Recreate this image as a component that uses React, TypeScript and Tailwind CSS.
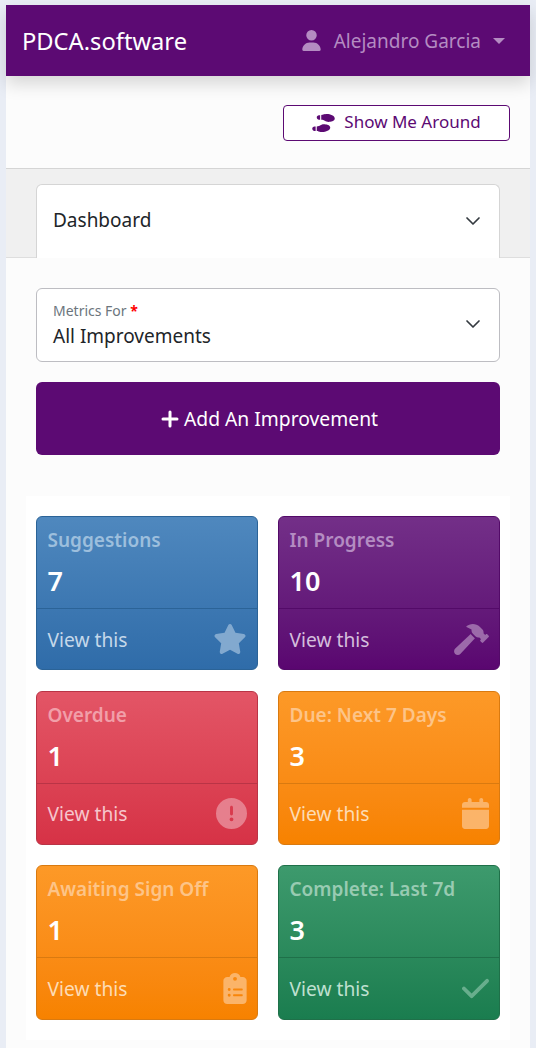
import { ChevronDown, Plus } from 'lucide-react';
import { FaHammer } from 'react-icons/fa';
import {
  FaCalendar,
  FaCheck,
  FaCircleExclamation,
  FaClipboardList,
  FaShoePrints,
  FaStar,
  FaUser,
} from 'react-icons/fa6';
import type { ReactNode } from 'react';

const font = { fontFamily: '"Noto Sans", sans-serif' };

type CardProps = {
  title: string;
  count: number;
  icon: ReactNode;
  bg: string;
  border: string;
  titleColor: string;
  linkColor: string;
  iconColor: string;
};

function StatCard({ title, count, icon, bg, border, titleColor, linkColor, iconColor }: CardProps) {
  return (
    <div className={`rounded-md border overflow-hidden ${bg} ${border}`}>
      <div className={`h-[92px] pl-[10.5px] pt-[11px] border-b ${border}`}>
        <div className={`text-[19px] leading-[25px] font-semibold whitespace-nowrap ${titleColor}`}>{title}</div>
        <div className="mt-[9px] text-[27px] leading-[38px] font-semibold text-white">{count}</div>
      </div>
      <div className="h-[60.4px] pl-[10.5px] pr-[10px] flex items-center justify-between">
        <span className={`text-[19.2px] pt-[2px] ${linkColor}`}>View this</span>
        <span className={`flex ${iconColor}`}>{icon}</span>
      </div>
    </div>
  );
}

const cards: CardProps[] = [
  {
    title: 'Suggestions',
    count: 7,
    icon: <FaStar className="w-[34px] h-[30px]" />,
    bg: 'bg-gradient-to-b from-[#4f88be] to-[#2f6ca9]',
    border: 'border-[#2b6397]',
    titleColor: 'text-[#9dbfdd]',
    linkColor: 'text-[#c5d8ea]',
    iconColor: 'text-[#82a9cf]',
  },
  {
    title: 'In Progress',
    count: 10,
    icon: <FaHammer className="w-[35px] h-[31px]" />,
    bg: 'bg-gradient-to-b from-[#732f88] to-[#5a0670]',
    border: 'border-[#530a68]',
    titleColor: 'text-[#b48cc2]',
    linkColor: 'text-[#d4bedc]',
    iconColor: 'text-[#9c6aaa]',
  },
  {
    title: 'Overdue',
    count: 1,
    icon: <FaCircleExclamation className="w-[31px] h-[31px]" />,
    bg: 'bg-gradient-to-b from-[#e35566] to-[#d63246]',
    border: 'border-[#b93446]',
    titleColor: 'text-[#f19fa9]',
    linkColor: 'text-[#f6c6cc]',
    iconColor: 'text-[#e67f8d]',
  },
  {
    title: 'Due: Next 7 Days',
    count: 3,
    icon: <FaCalendar className="w-[27px] h-[31px]" />,
    bg: 'bg-gradient-to-b from-[#fd9927] to-[#f78200]',
    border: 'border-[#d97a10]',
    titleColor: 'text-[#fdc488]',
    linkColor: 'text-[#fddcb5]',
    iconColor: 'text-[#fbb469]',
  },
  {
    title: 'Awaiting Sign Off',
    count: 1,
    icon: <FaClipboardList className="w-[24px] h-[31px]" />,
    bg: 'bg-gradient-to-b from-[#fd9927] to-[#f78200]',
    border: 'border-[#d97a10]',
    titleColor: 'text-[#fdc488]',
    linkColor: 'text-[#fddcb5]',
    iconColor: 'text-[#fbb469]',
  },
  {
    title: 'Complete: Last 7d',
    count: 3,
    icon: <FaCheck className="w-[27px] h-[31px]" />,
    bg: 'bg-gradient-to-b from-[#3d9a6d] to-[#1a7d4f]',
    border: 'border-[#1f7049]',
    titleColor: 'text-[#98cbb2]',
    linkColor: 'text-[#bfe0d0]',
    iconColor: 'text-[#68ae8d]',
  },
];

export default function App() {
  return (
    <div style={font} className="min-h-[1048px] bg-[#e9edf5] pt-[5px] px-[6px] overflow-hidden">
      <div className="bg-[#fcfcfc] min-h-[1043px]">
        <nav className="relative h-[71px] bg-[#5c0a73] pl-[16px] pr-[25px] flex items-center justify-between shadow-[0_8px_16px_rgba(0,0,0,0.15)]">
          <span className="text-[23.7px] mt-[2px] text-white">PDCA.software</span>
          <div className="flex items-center text-[#b48cc2]">
            <FaUser className="w-[19px] h-[21px] mr-[13px]" />
            <span className="text-[19px] mt-[2px]">Alejandro Garcia</span>
            <span className="ml-[12px] w-0 h-0 border-x-[6px] border-x-transparent border-t-[6px] border-t-[#b48cc2]" />
          </div>
        </nav>

        <div className="h-[93px] border-b border-[#d5d5d5] flex justify-end items-start pt-[29px] pr-[20px]">
          <button className="w-[227px] h-[36px] rounded-[4px] border border-[#5c0a73] bg-white flex items-center justify-center gap-[9px] text-[#5c0a73]">
            <FaShoePrints className="w-[23px] h-[18px]" />
            <span className="text-[17px] pb-[3px]">Show Me Around</span>
          </button>
        </div>

        <div className="h-[89px] bg-[#f0f0f0] px-[30px] pt-[15px] border-b border-[#dedede]">
          <div className="relative h-[74px] bg-white rounded-t-md border border-b-0 border-[#d5d5d5] pl-[16px] pr-[14px] pt-[20px] flex justify-between items-start">
            <span className="text-[19px] leading-[30px] text-[#212529]">Dashboard</span>
            <ChevronDown className="w-[24px] h-[24px] mt-[4px] text-[#343a40]" strokeWidth={1.7} />
          </div>
        </div>

        <div className="px-[30px] pt-[30px]">
          <div className="h-[74px] bg-white rounded-md border border-[#bdbdc2] pl-[16px] pr-[14px] flex items-center justify-between">
            <div>
              <div className="text-[14px] leading-[19px] text-[#6c757d]">
                Metrics For <span className="text-[#ff0000] font-bold">*</span>
              </div>
              <div className="mt-[3px] text-[19px] leading-[27px] text-[#212529]">All Improvements</div>
            </div>
            <ChevronDown className="w-[24px] h-[24px] -mt-[2px] text-[#343a40]" strokeWidth={1.7} />
          </div>

          <button className="mt-[20px] w-full h-[73px] bg-[#5c0a73] rounded-md flex items-center justify-center text-white">
            <Plus className="w-[24px] h-[24px] mr-[2px]" strokeWidth={3} />
            <span className="text-[19.3px] pt-[2px]">Add An Improvement</span>
          </button>
        </div>

        <div className="mt-[41px] mx-[20px] bg-white px-[10px] py-[20px] grid grid-cols-2 gap-x-[20px] gap-y-[20.2px]">
          {cards.map((c) => (
            <StatCard key={c.title} {...c} />
          ))}
        </div>
      </div>
    </div>
  );
}
